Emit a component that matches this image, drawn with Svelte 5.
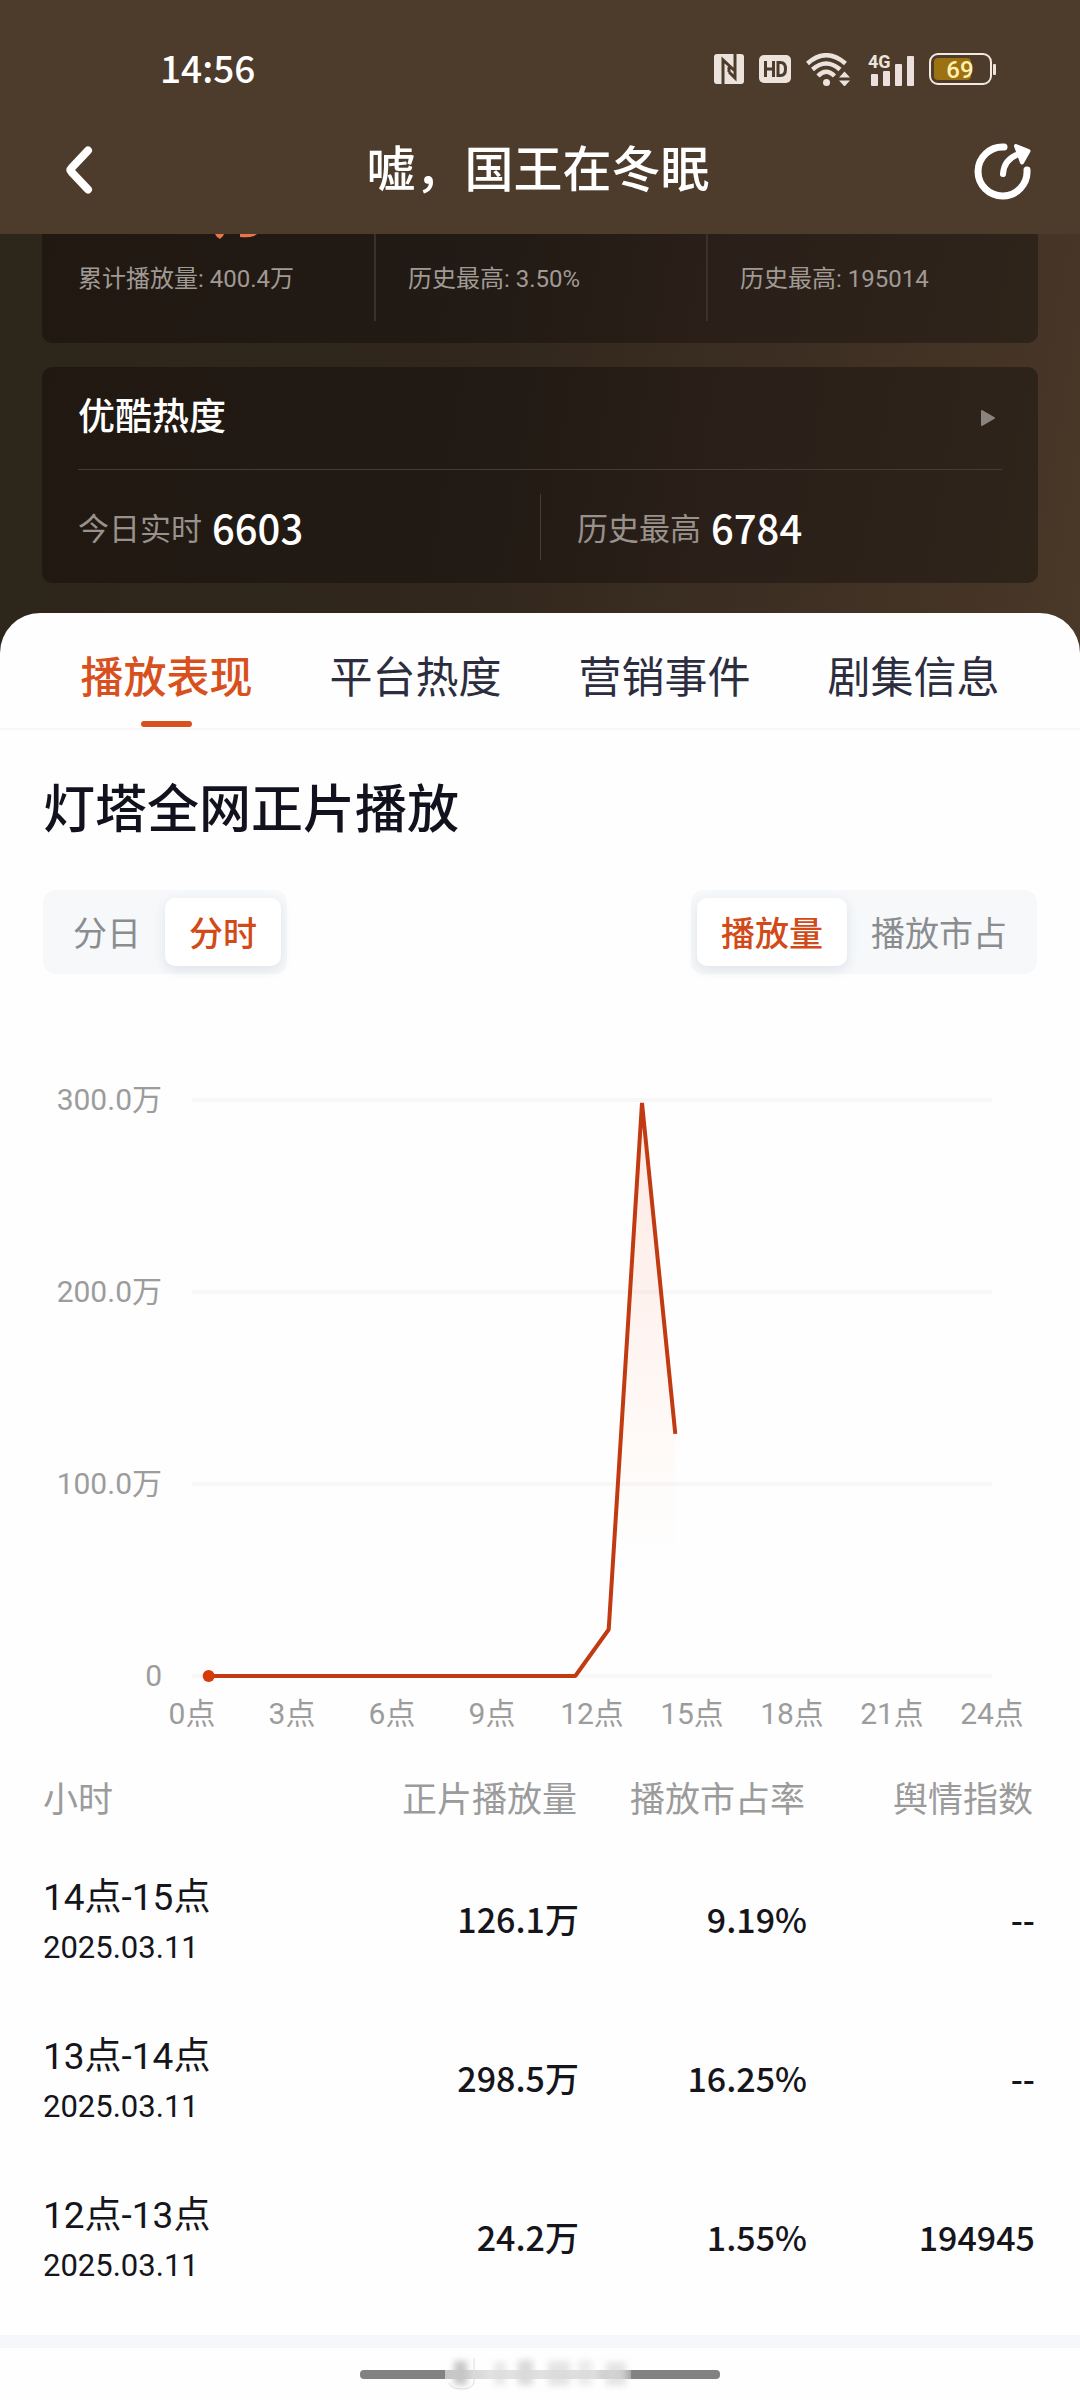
<script lang="ts">
  const tabs = ['播放表现', '平台热度', '营销事件', '剧集信息'];
  const periods = ['分日', '分时'];
  const metrics = ['播放量', '播放市占'];

  let activeTab = $state('播放表现');
  let activePeriod = $state('分时');
  let activeMetric = $state('播放量');

  const summary = ['累计播放量: 400.4万', '历史最高: 3.50%', '历史最高: 195014'];

  const rows = [
    { hour: '14点-15点', date: '2025.03.11', plays: '126.1万', share: '9.19%', index: '--' },
    { hour: '13点-14点', date: '2025.03.11', plays: '298.5万', share: '16.25%', index: '--' },
    { hour: '12点-13点', date: '2025.03.11', plays: '24.2万', share: '1.55%', index: '194945' }
  ];

  // Hourly plays, in 万
  const series = [0, 0, 0, 0, 0, 0, 0, 0, 0, 0, 0, 0, 24.2, 298.5, 126.1];

  const plot = { left: 192, right: 992, top: 126, bottom: 702, max: 300 };
  const yTicks = [
    { value: 300, label: '300.0万' },
    { value: 200, label: '200.0万' },
    { value: 100, label: '100.0万' },
    { value: 0, label: '0' }
  ];
  const xTicks = [0, 3, 6, 9, 12, 15, 18, 21, 24];

  function x(hour: number) {
    return plot.left + (hour / 24) * (plot.right - plot.left);
  }

  function y(value: number) {
    return plot.bottom - (value / plot.max) * (plot.bottom - plot.top);
  }

  // Each value sits in the middle of its hour
  const points = series.map((v, i) => `${x(i + 0.5).toFixed(1)},${y(v).toFixed(1)}`);
  const line = points.join(' ');
  const area = `${x(0.5)},${plot.bottom} ${line} ${x(series.length - 0.5)},${plot.bottom}`;
</script>

<div class="page">
  <div class="top">
    <div class="status">
      <span class="time">14:56</span>
      <div class="status-icons">
        <svg width="30" height="30" viewBox="0 0 30 30" aria-hidden="true">
          <rect width="30" height="30" rx="3" fill="#ece4dc" />
          <path d="M9 30V6l12 11M21 0v24L15 18M15 18v-5" fill="none" stroke="#4d3b2c" stroke-width="3" />
        </svg>
        <svg width="32" height="28" viewBox="0 0 32 28" aria-hidden="true">
          <rect width="32" height="28" rx="5" fill="#ece4dc" />
          <path d="M6.500 6v16M14.500 6v16M6.500 14h8M19 7.500v13h2.500q5 0 5-6.500t-5-6.500z" fill="none" stroke="#4d3b2c" stroke-width="3" />
        </svg>
        <svg width="46" height="33" viewBox="0 0 46 33" aria-hidden="true">
          <g fill="none" stroke="#ece4dc" stroke-width="4.500">
            <path d="M1.500 10.500Q20 -6 39.500 10.500" />
            <path d="M6.500 16.500Q20 4.500 34 16.500" />
            <path d="M12 23Q20 14.500 28.500 23" />
          </g>
          <circle cx="20.500" cy="29.500" r="3.500" fill="#ece4dc" />
          <path d="M33 24.500h11l-5.500-6zM33 27.500h11l-5.500 6z" fill="#ece4dc" />
        </svg>
        <svg width="47" height="45" viewBox="-1 -6 47 45" aria-hidden="true">
          <text x="0" y="15" class="net">4G</text>
          <g fill="#ece0de">
            <rect x="3" y="21" width="7" height="12" rx="1" />
            <rect x="15" y="18" width="7" height="15" rx="1" />
            <rect x="27" y="11" width="7" height="22" rx="1" />
            <rect x="39" y="3" width="7" height="30" rx="1" />
          </g>
        </svg>
        <svg width="67" height="32" viewBox="0 0 67 32" aria-hidden="true">
          <rect x="1" y="1" width="61" height="30" rx="8" fill="none" stroke="#f3e9dc" stroke-width="2" />
          <rect x="5" y="5" width="37" height="22" rx="4" fill="#9b7112" />
          <rect x="64" y="11" width="3" height="11" rx="1" fill="#ece4dc" />
          <text x="31" y="25" text-anchor="middle" class="charge">69</text>
        </svg>
      </div>
    </div>

    <header class="bar">
      <button class="icon-btn" aria-label="返回">
        <svg width="40" height="56" viewBox="0 0 40 56">
          <path d="M26 8.500L9.500 26Q7.500 28 9.500 30L26 47.500" fill="none" stroke="#fff" stroke-width="8" stroke-linecap="round" />
        </svg>
      </button>
      <h1>嘘，国王在冬眠</h1>
      <button class="icon-btn" aria-label="分享">
        <svg width="58" height="62" viewBox="0 0 58 62">
          <g fill="none" stroke="#fff" stroke-width="7" stroke-linecap="round" stroke-linejoin="round">
            <path d="M30 8A24.500 24.500 0 1 0 53 31" />
            <path d="M29 35Q30 20 45 15" stroke-width="6" />
          </g>
          <path d="M42 7L54.500 12L48 23.500Z" fill="#fff" stroke="#fff" stroke-width="4" stroke-linejoin="round" />
        </svg>
      </button>
    </header>
  </div>

  <section class="hero">
    <div class="card summary">
      {#each summary as item, i}
        <div class="summary-col">
          <!-- bottom edge of the big figure that has scrolled under the bar -->
          <svg width="220" height="6" viewBox="0 0 220 6" aria-hidden="true">
            {#if i === 0}
              <path d="M137 0h9l-1 2-3 3-3-2zM162 0h17l-3 2q-5 2-14 1z" fill="#e9764b" />
            {/if}
          </svg>
          <span>{item}</span>
        </div>
      {/each}
    </div>

    <div class="card heat">
      <div class="heat-head">
        <h2>优酷热度</h2>
        <svg width="16" height="18" viewBox="0 0 16 18" aria-hidden="true">
          <path d="M2 2L14 9L2 16Z" fill="#8b837d" stroke="#8b837d" stroke-width="2" stroke-linejoin="round" />
        </svg>
      </div>
      <div class="heat-body">
        <div class="heat-cell">今日实时 <strong>6603</strong></div>
        <div class="heat-cell second">历史最高 <strong>6784</strong></div>
      </div>
    </div>
  </section>

  <main class="sheet">
    <div class="tabs" role="tablist">
      {#each tabs as tab}
        <button
          role="tab"
          class="tab"
          class:active={tab === activeTab}
          aria-selected={tab === activeTab}
          onclick={() => (activeTab = tab)}
        >
          {tab}
        </button>
      {/each}
    </div>

    <h2 class="title">灯塔全网正片播放</h2>

    <div class="filters">
      <div class="segment">
        {#each periods as p}
          <button class:on={p === activePeriod} aria-pressed={p === activePeriod} onclick={() => (activePeriod = p)}>{p}</button>
        {/each}
      </div>
      <div class="segment">
        {#each metrics as m}
          <button class:on={m === activeMetric} aria-pressed={m === activeMetric} onclick={() => (activeMetric = m)}>{m}</button>
        {/each}
      </div>
    </div>

    <svg class="chart" viewBox="0 0 1080 780" role="img" aria-label="播放量">
      <defs>
        <linearGradient id="fade" x1="0" y1="0" x2="0" y2="1">
          <stop offset="0" stop-color="#ff5a2c" stop-opacity="0.13" />
          <stop offset="0.4" stop-color="#ff6a3c" stop-opacity="0.07" />
          <stop offset="0.8" stop-color="#ff9a5c" stop-opacity="0" />
        </linearGradient>
      </defs>
      {#each yTicks as tick}
        <line x1={plot.left} x2={plot.right} y1={y(tick.value)} y2={y(tick.value)} class="grid" />
        <text x="162" y={y(tick.value) + 10} text-anchor="end" class="axis">{tick.label}</text>
      {/each}
      {#each xTicks as hour}
        <text x={x(hour)} y="750" text-anchor="middle" class="axis">{hour}点</text>
      {/each}
      <polygon points={area} fill="url(#fade)" />
      <polyline points={line} class="line" />
      <circle cx={x(0.5)} cy={y(series[0])} r="6" class="dot" />
    </svg>

    <table>
      <thead>
        <tr>
          <th>小时</th>
          <th class="plays">正片播放量</th>
          <th class="share">播放市占率</th>
          <th class="index">舆情指数</th>
        </tr>
      </thead>
      <tbody>
        {#each rows as row}
          <tr>
            <td>
              <div class="hour">{row.hour}</div>
              <div class="date">{row.date}</div>
            </td>
            <td class="num">{row.plays}</td>
            <td class="num">{row.share}</td>
            <td class="num">{row.index}</td>
          </tr>
        {/each}
      </tbody>
    </table>

    <div class="band"></div>
    <div class="home">
      <svg width="360" height="52" viewBox="0 0 360 52" aria-hidden="true">
        <defs>
          <filter id="smudge" x="-10%" y="-30%" width="120%" height="160%">
            <feGaussianBlur stdDeviation="3" />
          </filter>
          <linearGradient id="bar-fade">
            <stop offset="0" stop-color="#c4c4c4" />
            <stop offset="0.25" stop-color="#e2e2e2" />
            <stop offset="0.8" stop-color="#dedede" />
            <stop offset="1" stop-color="#a8a8a8" />
          </linearGradient>
        </defs>
        <rect x="0" y="22" width="360" height="9" rx="4" fill="#828282" />
        <rect x="85" y="20" width="186" height="13" fill="#fff" />
        <rect x="85" y="22" width="186" height="9" fill="url(#bar-fade)" />
        <g filter="url(#smudge)" fill="#dadada">
          <rect x="94" y="13" width="13" height="24" fill="#c6c6c6" />
          <rect x="134" y="14" width="12" height="23" opacity="0.6" />
          <rect x="158" y="12" width="15" height="25" />
          <rect x="188" y="13" width="22" height="25" opacity="0.7" />
          <rect x="218" y="12" width="14" height="26" opacity="0.5" />
          <rect x="246" y="14" width="20" height="24" opacity="0.7" />
        </g>
        <path d="M89 35q2 6 13 6t12-7V10" fill="none" stroke="#dcdcdc" stroke-width="1" />
      </svg>
    </div>
  </main>
</div>

<style>
  :global(body) {
    margin: 0;
    background: #fefefe;
  }

  .page {
    font-family: Roboto, 'Noto Sans CJK SC', sans-serif;
    color: #15151b;
  }

  button {
    border: 0;
    margin: 0;
    padding: 0;
    background: none;
    font: inherit;
    color: inherit;
    cursor: pointer;
  }

  svg {
    display: block;
  }

  h1,
  h2 {
    margin: 0;
    font-weight: 500;
  }

  .top {
    background: #4d3b2c;
    color: #fff;
  }

  .status {
    display: flex;
    align-items: center;
    justify-content: space-between;
    height: 74px;
    padding: 32px 84px 0 160px;
  }

  .time {
    padding-bottom: 4px;
    font-family: 'Noto Sans CJK SC', sans-serif;
    font-size: 37px;
    line-height: 40px;
    font-weight: 500;
  }

  .status-icons {
    display: flex;
    align-items: center;
    gap: 15px;
  }

  .net {
    font-size: 18px;
    font-weight: 700;
    fill: #ece4dc;
  }

  .charge {
    font-size: 24px;
    font-weight: 500;
    fill: #fff0b0;
  }

  .bar {
    display: flex;
    align-items: center;
    justify-content: space-between;
    height: 128px;
    padding: 0 48px 0 62px;
  }

  .bar h1 {
    padding-top: 2px;
    font-size: 49px;
    line-height: 64px;
  }

  .hero {
    display: flex;
    flex-direction: column;
    gap: 24px;
    padding: 0 42px 70px;
    background: linear-gradient(100deg, #2d261b 0%, #30261c 40%, #3c2e22 70%, #4a3828 100%);
  }

  .card {
    border-radius: 10px;
    background: linear-gradient(100deg, #201811 0%, #221a14 45%, #2b2019 70%, #2e241a 100%);
  }

  .summary {
    display: grid;
    grid-template-columns: repeat(3, 1fr);
    padding-bottom: 22px;
    border-radius: 0 0 10px 10px;
    color: #a09a95;
    font-size: 24px;
    line-height: 32px;
  }

  .summary-col {
    display: flex;
    flex-direction: column;
    gap: 23px;
    height: 87px;
    padding-left: 36px;
    white-space: nowrap;
  }

  .summary-col + .summary-col {
    padding-left: 32px;
    border-left: 2px solid #3a312a;
  }

  .heat {
    padding: 0 36px;
    color: #98918c;
  }

  .heat-head {
    display: flex;
    align-items: center;
    justify-content: space-between;
    height: 102px;
    padding-right: 6px;
    border-bottom: 1px solid #453c36;
  }

  .heat-head h2 {
    font-size: 37px;
    line-height: 48px;
    color: #fff;
  }

  .heat-body {
    display: grid;
    grid-template-columns: 1fr 1fr;
    align-items: center;
    height: 113px;
    font-size: 31px;
  }

  .heat-cell {
    display: flex;
    align-items: center;
    gap: 10px;
    height: 66px;
  }

  .heat-cell.second {
    padding-left: 36px;
    border-left: 1px solid #453c36;
  }

  .heat-cell strong {
    font-family: 'Noto Sans CJK SC', sans-serif;
    font-size: 40px;
    line-height: 48px;
    font-weight: 500;
    color: #fff;
  }

  .sheet {
    margin-top: -40px;
    border-radius: 40px 40px 0 0;
    background: #fefefe;
  }

  .tabs {
    display: flex;
    padding: 0 42px;
    border-bottom: 2px solid #f5f6f8;
  }

  .tab {
    flex: 1;
    display: flex;
    flex-direction: column;
    align-items: center;
    gap: 13px;
    padding: 35px 0 1px;
    font-size: 43px;
    line-height: 60px;
    color: #2c2d3e;
    white-space: nowrap;
  }

  .tab::after {
    content: '';
    width: 51px;
    height: 6px;
    border-radius: 3px;
  }

  .tab.active {
    color: #d8501e;
    font-weight: 500;
  }

  .tab.active::after {
    background: #d8501e;
  }

  .title {
    padding: 45px 43px 43px;
    font-size: 52px;
    line-height: 72px;
    color: #12121f;
  }

  .filters {
    display: flex;
    justify-content: space-between;
    padding: 0 43px;
  }

  .segment {
    display: flex;
    padding: 8px 6px;
    border-radius: 12px;
    background: #f6f8fa;
  }

  .segment button {
    height: 68px;
    padding: 3px 24px 0;
    border-radius: 10px;
    font-size: 34px;
    line-height: 48px;
    color: #8a8c90;
  }

  .segment .on {
    background: #fff;
    box-shadow: 0 4px 12px #dfe3e8;
    color: #d14a18;
    font-weight: 500;
  }

  .chart {
    width: 100%;
    height: auto;
  }

  .grid {
    stroke: #f7f7f7;
    stroke-width: 4;
  }

  .axis {
    font-size: 30px;
    fill: #9c9c9c;
  }

  .line {
    fill: none;
    stroke: #c23a12;
    stroke-width: 4;
    stroke-linejoin: bevel;
  }

  .dot {
    fill: #d63a08;
  }

  table {
    width: calc(100% - 88px);
    margin: 0 45px 0 43px;
    border-collapse: collapse;
    table-layout: fixed;
  }

  th,
  td {
    padding: 0;
    text-align: right;
  }

  th {
    height: 85px;
    padding: 0 2px 2px 0;
    font-size: 35px;
    font-weight: 400;
    color: #9b9b9b;
  }

  th:first-child,
  td:first-child {
    text-align: left;
  }

  .plays {
    width: 236px;
  }

  .share,
  .index {
    width: 226px;
  }

  td {
    height: 159px;
  }

  .hour {
    font-size: 37px;
    line-height: 54px;
  }

  .date {
    font-size: 31px;
    line-height: 46px;
  }

  .num {
    height: 155px;
    padding-bottom: 4px;
    font-family: 'Noto Sans CJK SC', sans-serif;
    font-size: 34px;
    line-height: 48px;
    font-weight: 500;
  }

  .band {
    height: 13px;
    margin-top: 17px;
    background: #f5f7fa;
  }

  .home {
    display: flex;
    justify-content: center;
  }
</style>
